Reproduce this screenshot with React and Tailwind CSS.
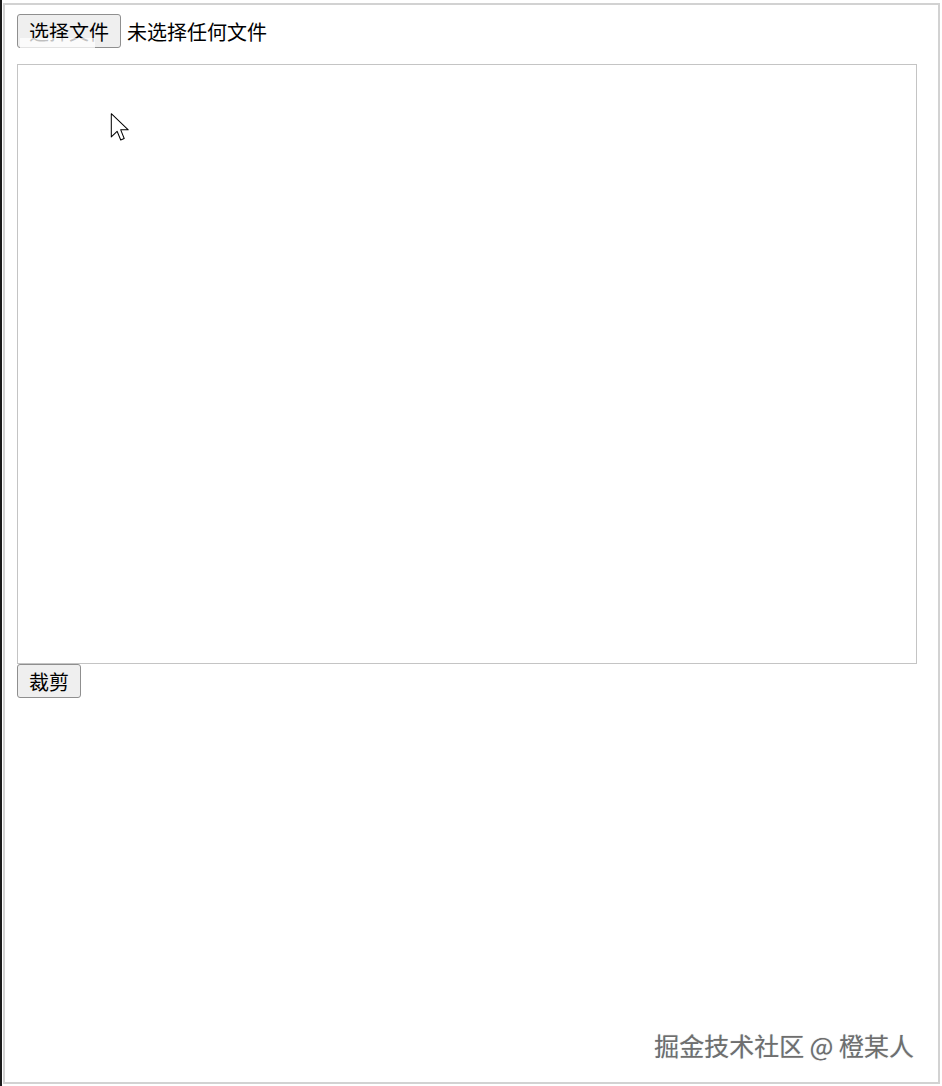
const font = { fontFamily: '"Noto Sans CJK SC", "Noto Sans", sans-serif' };

const Cursor = () => (
  <svg className="absolute left-[108px] top-[113px]" width="20" height="29" viewBox="0 0 13 20">
    <path
      d="M0.5 0.5 L0.5 16.5 L4.5 12.6 L7 18.6 L9.4 17.6 L7 11.6 L12.2 11.6 Z"
      fill="#fff"
      stroke="#000"
      strokeWidth="0.7"
      strokeLinejoin="round"
    />
  </svg>
);

export default function App() {
  return (
    <div className="relative h-[1086px] w-[942px] overflow-hidden border-l-2 border-[#1b1b1b] bg-white" style={font}>
      <div className="relative ml-px mt-[3px] h-[1081px] w-[937px] border-2 border-[#d2d2d2] px-[12px] pt-[9px]">
        {/* file picker */}
        <div className="flex items-center gap-[6px] text-[20px] text-black">
          <button className="h-[34px] rounded-[3px] border border-[#8f8f8f] bg-[#efefef] px-[11px] pt-px leading-none">
            选择文件
          </button>
          <span className="pt-[2px] leading-none">未选择任何文件</span>
        </div>

        {/* canvas area */}
        <div className="mt-[16px] h-[600px] w-[900px] border border-[#c4c4c4] bg-white" />

        <button className="h-[34px] rounded-[3px] border border-[#8f8f8f] bg-[#efefef] px-[11px] pt-px text-[20px] leading-none text-black">
          裁剪
        </button>

        {/* watermark */}
        <div
          className="absolute bottom-[24px] right-[24px] text-[25px] font-normal leading-none text-[#6e6e6e]"
          style={{ textShadow: '1px 1px 0 #fff, 0 0 1px #8a8a8a' }}
        >
          掘金技术社区 @ 橙某人
        </div>
      </div>

      {/* recording artefact over the button */}
      <div className="absolute left-[18px] top-[38px] h-[26px] w-[75px] bg-white/75" />
      <Cursor />
    </div>
  );
}
